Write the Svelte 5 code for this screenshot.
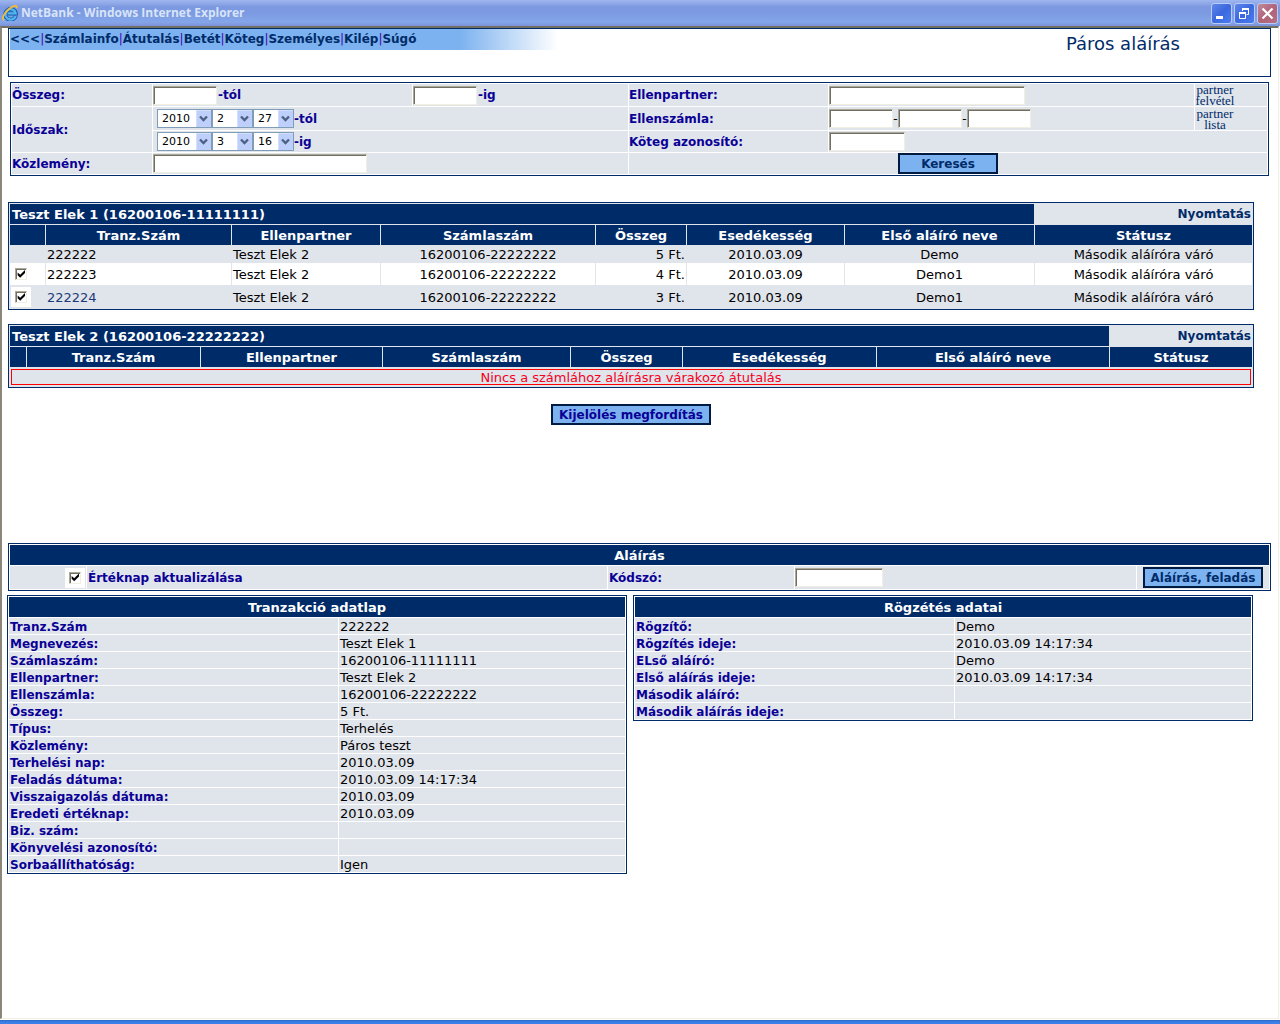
<script lang="ts">
  const menu = ['Számlainfo', 'Átutalás', 'Betét', 'Köteg', 'Személyes', 'Kilép', 'Súgó'];
  const headings = ['', 'Tranz.Szám', 'Ellenpartner', 'Számlaszám', 'Összeg', 'Esedékesség', 'Első aláíró neve', 'Státusz'];

  // relative column weights
  const searchCols = [140, 259, 215, 199, 365, 72];
  const signCols = [76, 520, 186, 341, 132];

  let accounts = $state([
    {
      name: 'Teszt Elek 1 (16200106-11111111)',
      cols: [35, 185, 148, 214, 90, 157, 189, 217],
      rows: [
        { id: '222222', selectable: false, checked: false, partner: 'Teszt Elek 2', account: '16200106-22222222', amount: '5 Ft.', due: '2010.03.09', signer: 'Demo', status: 'Második aláíróra váró' },
        { id: '222223', selectable: true, checked: true, partner: 'Teszt Elek 2', account: '16200106-22222222', amount: '4 Ft.', due: '2010.03.09', signer: 'Demo1', status: 'Második aláíróra váró' },
        { id: '222224', selectable: true, checked: true, partner: 'Teszt Elek 2', account: '16200106-22222222', amount: '3 Ft.', due: '2010.03.09', signer: 'Demo1', status: 'Második aláíróra váró' },
      ],
    },
    {
      name: 'Teszt Elek 2 (16200106-22222222)',
      cols: [16, 173, 181, 187, 111, 193, 232, 142],
      rows: [],
    },
  ]);

  const details = [
    {
      title: 'Tranzakció adatlap',
      cols: [329, 286],
      rows: [
        ['Tranz.Szám', '222222'],
        ['Megnevezés:', 'Teszt Elek 1'],
        ['Számlaszám:', '16200106-11111111'],
        ['Ellenpartner:', 'Teszt Elek 2'],
        ['Ellenszámla:', '16200106-22222222'],
        ['Összeg:', '5 Ft.'],
        ['Típus:', 'Terhelés'],
        ['Közlemény:', 'Páros teszt'],
        ['Terhelési nap:', '2010.03.09'],
        ['Feladás dátuma:', '2010.03.09 14:17:34'],
        ['Visszaigazolás dátuma:', '2010.03.09'],
        ['Eredeti értéknap:', '2010.03.09'],
        ['Biz. szám:', ''],
        ['Könyvelési azonosító:', ''],
        ['Sorbaállíthatóság:', 'Igen'],
      ],
    },
    {
      title: 'Rögzétés adatai',
      cols: [319, 296],
      rows: [
        ['Rögzítő:', 'Demo'],
        ['Rögzítés ideje:', '2010.03.09 14:17:34'],
        ['ELső aláíró:', 'Demo'],
        ['Első aláírás ideje:', '2010.03.09 14:17:34'],
        ['Második aláíró:', ''],
        ['Második aláírás ideje:', ''],
      ],
    },
  ];

  function invertSelection() {
    for (const account of accounts) {
      for (const row of account.rows) {
        if (row.selectable) row.checked = !row.checked;
      }
    }
  }
</script>

{#snippet columns(widths: number[])}
  {@const total = widths.reduce((a, b) => a + b, 0)}
  <colgroup>
    {#each widths as w}
      <col style="width: {(w / total) * 100}%" />
    {/each}
  </colgroup>
{/snippet}

{#snippet picker(label: string, value: string, wide: boolean)}
  <span class="picker" class:wide>
    <select aria-label={label}>
      <option>{value}</option>
    </select>
    <svg class="arrow" viewBox="0 0 15 17" aria-hidden="true">
      <rect width="15" height="17" rx="1" fill="#bdcffa" />
      <path d="M.5 16V.5H14.5" fill="none" stroke="#d3dffd" />
      <path d="M4 6.5 7.500 10 11 6.500" fill="none" stroke="#4d6185" stroke-width="2.4" />
    </svg>
  </span>
{/snippet}

{#snippet dates(name: string, year: string, month: string, day: string)}
  <div class="line dates">
    {@render picker(`${name} év`, year, true)}
    {@render picker(`${name} hónap`, month, false)}
    {@render picker(`${name} nap`, day, false)}
    <b>{name}</b>
  </div>
{/snippet}

<div class="window">
  <header class="titlebar">
    <svg class="ie" viewBox="0 0 16 16" aria-hidden="true">
      <path d="M13.800 10.800A5.300 5.300 0 1 1 13.900 8.400H5.600" fill="none" stroke="#1759ad" stroke-width="4" />
      <path d="M13.600 10.800A5.200 5.200 0 1 1 13.700 8.400H5.600" fill="none" stroke="#4fb6ee" stroke-width="2.400" />
      <path d="M2.200 15.200C-.8 14 1.600 8.800 6.500 4.500S15.600-.6 14.600 3.300" fill="none" stroke="#f0bd35" stroke-width="1.800" />
    </svg>
    <span class="caption">NetBank - Windows Internet Explorer</span>
    <button class="win" aria-label="Kis méret">
      <svg viewBox="0 0 19 19"><path d="M4 12H11V15H4Z" fill="#fff" /></svg>
    </button>
    <button class="win" aria-label="Előző méret">
      <svg viewBox="0 0 19 19" fill="none" stroke="#fff">
        <path d="M7.500 7V4.500H13.500V10.500H11.500" />
        <path d="M7 5H14" stroke-width="2" />
        <path d="M4.500 8.500H10.500V14.500H4.500Z" />
        <path d="M4 9H11" stroke-width="2" />
      </svg>
    </button>
    <button class="win close" aria-label="Bezárás">
      <svg viewBox="0 0 19 19"><path d="M4.500 4.500 14.500 14.500M14.500 4.500 4.500 14.500" stroke="#fff" stroke-width="2.200" /></svg>
    </button>
  </header>

  <main>
    <div class="top">
      <nav>
        <a href="#back">&lt;&lt;&lt;</a>{#each menu as item}|<a href="#{item}">{item}</a>{/each}
      </nav>
      <h1>Páros aláírás</h1>
    </div>

    <form class="search" onsubmit={(e) => e.preventDefault()}>
      <table>
        {@render columns(searchCols)}
        <tbody>
          <tr class="tall">
            <th scope="row"><label for="amount-from">Összeg:</label></th>
            <td><div class="line"><input id="amount-from" class="short" type="text" /><b>-tól</b></div></td>
            <td><div class="line"><input class="short" type="text" aria-label="Összeg -ig" /><b>-ig</b></div></td>
            <th scope="row"><label for="partner">Ellenpartner:</label></th>
            <td><div class="line"><input id="partner" class="partner" type="text" /></div></td>
            <td><a class="small-link" href="#uj-partner">partner felvétel</a></td>
          </tr>
          <tr class="taller">
            <th scope="row" rowspan="2">Időszak:</th>
            <td colspan="2">{@render dates('-tól', '2010', '2', '27')}</td>
            <th scope="row"><label for="account">Ellenszámla:</label></th>
            <td>
              <div class="line">
                <input id="account" class="short" type="text" />
                <span class="dash">-</span>
                <input class="short" type="text" aria-label="Ellenszámla 2" />
                <span class="dash">-</span>
                <input class="short" type="text" aria-label="Ellenszámla 3" />
              </div>
            </td>
            <td><a class="small-link" href="#partnerek">partner lista</a></td>
          </tr>
          <tr>
            <td colspan="2">{@render dates('-ig', '2010', '3', '16')}</td>
            <th scope="row"><label for="batch">Köteg azonosító:</label></th>
            <td colspan="2"><div class="line"><input id="batch" class="batch" type="text" /></div></td>
          </tr>
          <tr>
            <th scope="row"><label for="note">Közlemény:</label></th>
            <td colspan="2"><div class="line"><input id="note" class="note" type="text" /></div></td>
            <td colspan="3"><div class="line center"><button class="btn search-btn">Keresés</button></div></td>
          </tr>
        </tbody>
      </table>
    </form>

    {#each accounts as account}
      <table class="results">
        {@render columns(account.cols)}
        <thead>
          <tr>
            <th class="name" colspan="7">{account.name}</th>
            <td class="print"><a href="#nyomtatas">Nyomtatás</a></td>
          </tr>
          <tr>
            {#each headings as heading}
              <th>{heading}</th>
            {/each}
          </tr>
        </thead>
        <tbody>
          {#each account.rows as row, i}
            <tr class:selectable={row.selectable} class:odd={i % 2 === 1}>
              <td class="pick">
                {#if row.selectable}
                  <span class="check"><input type="checkbox" aria-label={row.id} bind:checked={row.checked} /></span>
                {/if}
              </td>
              <td class="left" class:visited={i === 2}>{row.id}</td>
              <td class="left">{row.partner}</td>
              <td>{row.account}</td>
              <td class="right">{row.amount}</td>
              <td>{row.due}</td>
              <td>{row.signer}</td>
              <td>{row.status}</td>
            </tr>
          {:else}
            <tr>
              <td class="pick" colspan="8"><div class="empty">Nincs a számlához aláírásra várakozó átutalás</div></td>
            </tr>
          {/each}
        </tbody>
      </table>
    {/each}

    <div class="actions">
      <button class="btn invert" onclick={invertSelection}>Kijelölés megfordítás</button>
    </div>

    <table class="sign">
      {@render columns(signCols)}
      <thead>
        <tr><th colspan="5">Aláírás</th></tr>
      </thead>
      <tbody>
        <tr>
          <td><div class="line end"><span class="check"><input id="update" type="checkbox" checked /></span></div></td>
          <td><label for="update">Értéknap aktualizálása</label></td>
          <td><label for="code">Kódszó:</label></td>
          <td><div class="line"><input id="code" class="code" type="password" /></div></td>
          <td><div class="line center"><button class="btn sign-btn">Aláírás, feladás</button></div></td>
        </tr>
      </tbody>
    </table>

    <div class="details">
      {#each details as sheet}
        <table>
          {@render columns(sheet.cols)}
          <thead>
            <tr><th colspan="2">{sheet.title}</th></tr>
          </thead>
          <tbody>
            {#each sheet.rows as [label, value]}
              <tr><th scope="row">{label}</th><td>{value}</td></tr>
            {/each}
          </tbody>
        </table>
      {/each}
    </div>
  </main>
  <div class="frame-bottom"></div>
</div>

<style>
  :global(body) {
    margin: 0;
    background: #fff;
  }

  .window {
    --navy: #002b69;
    --label: #0a0096;
    --cell: #e0e4eb;
    display: flex;
    flex-direction: column;
    min-height: 100vh;
    font: 13px/16px 'DejaVu Sans', sans-serif;
    color: #000;
  }

  .titlebar {
    display: flex;
    align-items: center;
    gap: 2px;
    box-sizing: border-box;
    height: 26px;
    padding: 0 2px;
    background: linear-gradient(#9db6ef 0, #92abe9 3px, #7b98e0 7px, #7d9be2 14px, #84a6e9 22px, #7d92dc 26px);
  }

  .ie {
    width: 16px;
    height: 16px;
  }

  .caption {
    flex: 1;
    padding-left: 1px;
    font: bold 12px/16px 'Open Sans', sans-serif;
    color: #d8e4f8;
  }

  .win {
    width: 21px;
    height: 21px;
    padding: 0;
    border: 1px solid #b8cbf7;
    border-radius: 3px;
    background: linear-gradient(135deg, #5f86ea, #3b68de 50%, #4c7cf0);
  }

  .win.close {
    background: linear-gradient(135deg, #c18a9a, #b0637a 50%, #b66f80);
  }

  .win svg {
    display: block;
    width: 19px;
    height: 19px;
  }

  main {
    flex: 1;
    margin-right: 1px;
    padding-left: 5px;
    border: solid;
    border-width: 2px 1px 1px 2px;
    border-color: #716f64 #f1efe2 #f1efe2 #8a877a;
  }

  .top {
    display: flex;
    justify-content: space-between;
    align-items: flex-start;
    box-sizing: border-box;
    height: 49px;
    margin: 0 7px 5px 1px;
    padding-left: 1px;
    border: 1px solid var(--navy);
  }

  nav {
    width: 550px;
    font-size: 12px;
    line-height: 21px;
    white-space: nowrap;
    color: #4b00b4;
    background: linear-gradient(to right, #7cb2ef 450px, #fff 548px);
  }

  nav a,
  .print a {
    font-weight: bold;
    color: var(--navy);
    text-decoration: none;
  }

  h1 {
    margin: 4px 90px 0 0;
    font-size: 18px;
    line-height: 22px;
    font-weight: normal;
    color: var(--navy);
  }

  table {
    width: 100%;
    table-layout: fixed;
    border: 1px solid var(--navy);
    border-collapse: separate;
    border-spacing: 1px;
    background: #fff;
  }

  th,
  td {
    padding: 0 1px;
    background: var(--cell);
  }

  .search {
    margin: 0 9px 26px 3px;
  }

  .search th,
  .search td {
    height: 21px;
    padding: 0;
    text-align: left;
  }

  .search .tall > * {
    height: 22px;
  }

  .search .taller > * {
    height: 23px;
  }

  .search th,
  .search b,
  .sign label,
  .details tbody th {
    font-weight: bold;
    font-size: 12px;
    color: var(--label);
  }

  .line {
    display: flex;
    align-items: center;
  }

  .line b {
    padding-left: 1px;
  }

  .line.center {
    justify-content: center;
  }

  .line.end {
    justify-content: flex-end;
  }

  .dates {
    padding-left: 4px;
  }

  .dates b {
    padding: 0;
  }

  input[type='text'],
  input[type='password'] {
    box-sizing: border-box;
    height: 19px;
    padding: 0 2px;
    border: 1px solid;
    border-color: #aca899 #f1efe2 #f1efe2 #aca899;
    border-radius: 0;
    box-shadow: inset 1px 1px #716f64;
    background: #fff;
    font: inherit;
  }

  .short {
    width: 64px;
  }

  .partner {
    width: 196px;
  }

  .batch {
    width: 76px;
  }

  .note {
    width: 214px;
  }

  .code {
    width: 88px;
  }

  .dash {
    width: 5px;
    text-align: center;
    font-family: 'Liberation Serif', serif;
  }

  .picker {
    position: relative;
    width: 41px;
    height: 19px;
  }

  .picker.wide {
    width: 55px;
  }

  .picker select {
    display: block;
    box-sizing: border-box;
    width: 100%;
    height: 19px;
    padding: 0 0 0 4px;
    border: 1px solid #7f9db9;
    border-radius: 0;
    appearance: none;
    background: #fff;
    color: #000;
    font: 11px/17px 'DejaVu Sans', sans-serif;
  }

  .arrow {
    position: absolute;
    top: 1px;
    right: 1px;
    width: 15px;
    height: 17px;
    pointer-events: none;
  }

  .small-link {
    display: block;
    width: 40px;
    text-align: center;
    font: 13px/11px 'Liberation Serif', serif;
    color: var(--navy);
    text-decoration: none;
  }

  .btn {
    height: 21px;
    padding: 0;
    border: 2px solid #001b42;
    border-radius: 0;
    background: #7cb2ef;
    font: bold 12px/16px 'DejaVu Sans', sans-serif;
    color: var(--navy);
    white-space: nowrap;
  }

  .search-btn {
    width: 100px;
  }

  .invert {
    width: 160px;
    color: var(--label);
  }

  .sign-btn {
    width: 120px;
  }

  .check {
    display: block;
    padding: 4px;
    background: #fff;
  }

  .check input {
    display: block;
    box-sizing: border-box;
    width: 12px;
    height: 12px;
    margin: 0;
    padding: 1px;
    border: 1px solid;
    border-color: #aca899 #f1efe2 #f1efe2 #aca899;
    box-shadow: inset 1px 1px #716f64;
    appearance: none;
    background: #fff;
  }

  .check input:checked::before {
    content: '';
    display: block;
    width: 8px;
    height: 8px;
    background: #000;
    clip-path: polygon(8% 30%, 40% 60%, 100% 0, 100% 38%, 40% 96%, 8% 65%);
  }

  .results {
    width: calc(100% - 25px);
    margin: 0 0 14px 1px;
    background: var(--cell);
  }

  .results thead th,
  .sign thead th,
  .details thead th {
    box-sizing: border-box;
    height: 20px;
    padding-top: 2px;
    background: var(--navy);
    color: #fff;
  }

  .results .name {
    padding-left: 2px;
    text-align: left;
  }

  .results .print {
    text-align: right;
    font-size: 12px;
  }

  .results tbody td {
    box-sizing: border-box;
    height: 16px;
    padding-top: 2px;
    line-height: 14px;
    text-align: center;
  }

  .results tbody td.pick {
    padding-top: 0;
  }

  .results .selectable td {
    height: 22px;
  }

  .results .odd td {
    background: #fff;
  }

  .results .check {
    width: 12px;
  }

  .results tbody td.left {
    text-align: left;
  }

  .results tbody td.right {
    text-align: right;
  }

  .visited {
    color: #1b3a7a;
  }

  .empty {
    margin: 1px 0;
    padding-top: 1px;
    border: 1px solid #f00;
    line-height: 13px;
    color: #f5001d;
  }

  .actions {
    display: flex;
    justify-content: center;
    margin: 16px 24px 118px 1px;
  }

  .sign {
    width: calc(100% - 8px);
    margin: 0 0 4px 1px;
  }

  .sign tbody td {
    height: 23px;
    padding: 0;
  }

  .sign tbody td:first-child {
    padding-right: 1px;
  }

  .sign label {
    padding-left: 1px;
  }

  .details {
    display: grid;
    grid-template-columns: 1fr 1fr;
    align-items: start;
    gap: 6px;
    margin-right: 25px;
  }

  .details tbody th {
    text-align: left;
  }

  .details tbody td,
  .details tbody th {
    box-sizing: border-box;
    height: 16px;
    padding-top: 2px;
    line-height: 14px;
  }

  .frame-bottom {
    height: 4px;
    margin-top: 1px;
    background: linear-gradient(#2f66c0, #3a80e8 2px);
  }
</style>
